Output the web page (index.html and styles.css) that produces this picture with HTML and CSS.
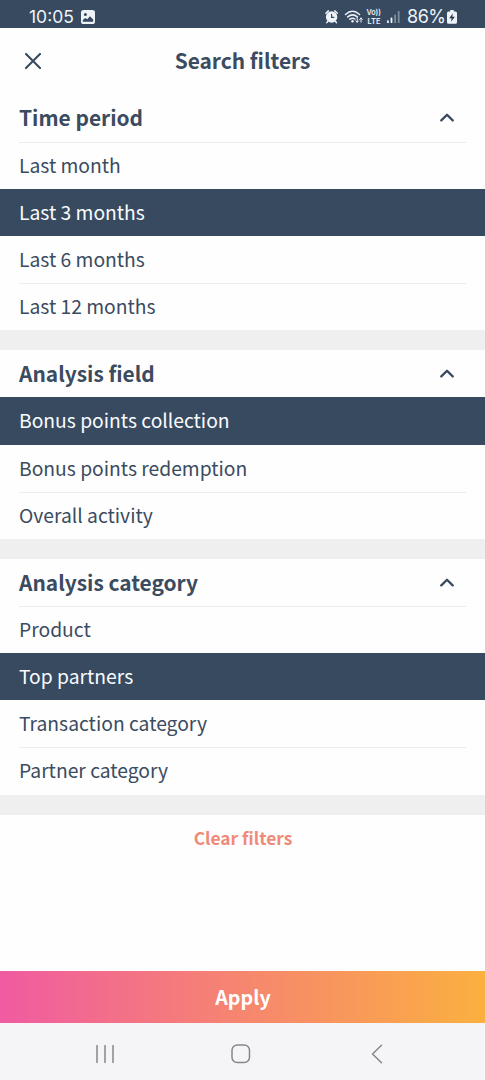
FILE: index.html
```html
<!DOCTYPE html>
<html lang="en">
<head>
<meta charset="utf-8">
<title>Search filters</title>
<link rel="stylesheet" href="styles.css">
</head>
<body>
<div class="screen">
  <div class="status">
    <span class="clock">10:05</span>
    <svg class="photo" width="14" height="14" viewBox="0 0 14 14"><rect width="14" height="14" rx="2.6" fill="#eef3fa"/><circle cx="4.4" cy="4.6" r="1.5" fill="#384a60"/><path d="M1.8 11.8V10l2.400-2 2 1.300L9 6.200l3.200 3.200v2.400z" fill="#384a60"/></svg>
    <svg class="indicators" width="78" height="18" viewBox="0 0 78 18">
      <g fill="none" stroke="#eef3fa" stroke-linecap="round">
        <circle cx="6.600" cy="9" r="5.700" fill="#eef3fa" stroke="none"/>
        <path d="M.9 5.200l2.500-2.300M12.300 5.200L9.800 2.900M2.800 13.200l-1 1.400M10.400 13.200l1 1.400" stroke-width="1.500"/>
        <path d="M6.600 6.400V9.400H8.800" stroke="#384a60" stroke-width="1.200"/>
        <path d="M20.500 6.500Q27.500 0 34.500 6.500M22.700 8.900Q27.500 4.800 32.300 8.900M24.900 11.200Q27.500 9.300 29.800 11" stroke-width="1.500"/>
        <circle cx="27.500" cy="13.200" r="1.200" fill="#eef3fa" stroke="none"/>
        <path d="M32.200 10v4.200M30.800 12.900l1.400 1.400 1.400-1.400M36 14.200V10M34.600 11.400L36 10l1.400 1.400" stroke-width="1"/>
      </g>
      <g class="volte" fill="#eef3fa"><text x="41.500" y="6.800" textLength="14.500" lengthAdjust="spacingAndGlyphs">Vo))</text><text x="42.500" y="15.600" textLength="13" lengthAdjust="spacingAndGlyphs">LTE</text></g>
      <g fill="#eef3fa"><rect x="62" y="12.200" width="1.800" height="2.800" rx=".6"/><rect x="65.600" y="9.400" width="1.800" height="5.600" rx=".6"/><rect x="69.200" y="6.400" width="1.800" height="8.600" rx=".6" opacity=".4"/><rect x="72.800" y="3" width="1.800" height="12" rx=".6" opacity=".4"/></g>
    </svg>
    <span class="percent">86%</span>
    <svg class="battery" width="10" height="14" viewBox="0 0 10 14"><path d="M3.200 0h3.600v1.400H8.400A1.600 1.600 0 0 1 10 3v9.200a1.600 1.600 0 0 1-1.600 1.600H1.600A1.600 1.600 0 0 1 0 12.200V3a1.600 1.600 0 0 1 1.600-1.600h1.600z" fill="#eef3fa"/><path d="M5.900 3.300L2.200 8.300h2.400l-.6 3.500 3.900-5H5.300z" fill="#26384d"/></svg>
  </div>
  <header class="title-bar">
    <svg class="close" width="16" height="16" viewBox="0 0 16 16"><path d="M1 1l14 14M15 1L1 15"/></svg>
    <h1>Search filters</h1>
  </header>
  <section class="group">
    <h2>Time period<svg class="chevron" width="14" height="9" viewBox="0 0 14 9"><path d="M1.300 7.400L7 1.700l5.700 5.700"/></svg></h2>
    <div class="option"><span>Last month</span></div>
    <div class="option selected"><span>Last 3 months</span></div>
    <div class="option bare"><span>Last 6 months</span></div>
    <div class="option"><span>Last 12 months</span></div>
  </section>
  <section class="group">
    <h2>Analysis field<svg class="chevron" width="14" height="9" viewBox="0 0 14 9"><path d="M1.300 7.400L7 1.700l5.700 5.700"/></svg></h2>
    <div class="option selected"><span>Bonus points collection</span></div>
    <div class="option bare"><span>Bonus points redemption</span></div>
    <div class="option"><span>Overall activity</span></div>
  </section>
  <section class="group">
    <h2>Analysis category<svg class="chevron" width="14" height="9" viewBox="0 0 14 9"><path d="M1.300 7.400L7 1.700l5.700 5.700"/></svg></h2>
    <div class="option"><span>Product</span></div>
    <div class="option selected"><span>Top partners</span></div>
    <div class="option bare"><span>Transaction category</span></div>
    <div class="option"><span>Partner category</span></div>
  </section>
  <div class="clear">Clear filters</div>
  <div class="apply">Apply</div>
  <nav class="nav">
    <svg width="18" height="18" viewBox="0 0 18 18"><path d="M1 .5v17M9 .5v17M17 .5v17"/></svg>
    <svg class="home" width="20" height="20" viewBox="0 0 20 20"><rect x="1" y="1" width="17.500" height="17.500" rx="5.300"/></svg>
    <svg width="12" height="20" viewBox="0 0 12 20"><path d="M10.500 1.200L1.500 10l9 8.800"/></svg>
  </nav>
</div>
</body>
</html>
```
FILE: styles.css
```css
* { box-sizing: border-box; }
body { margin: 0; background: #fefefe; }
.screen {
  width: 485px;
  height: 1080px;
  display: flex;
  flex-direction: column;
  overflow: hidden;
  color: #3b4b60;
  font-family: "Noto Sans CJK SC", "Noto Sans", sans-serif;
}
.status {
  flex: none;
  height: 28.400px;
  padding: 5px 28px 0 29px;
  display: flex;
  align-items: center;
  background: #384a60;
  color: #eef3fa;
  font: 400 17.500px/24px Inter, sans-serif;
}
.clock { width: 44px; white-space: nowrap; }
.photo { margin-left: 8px; }
.indicators { margin-left: auto; margin-right: 4px; }
.percent { width: 37px; margin-right: 3px; font-size: 18px; letter-spacing: -0.500px; }
.volte { font: 600 8px Inter, sans-serif; }
.title-bar {
  flex: none;
  height: 66.200px;
  display: grid;
  grid-template-columns: 73px 1fr 73px;
  align-items: center;
}
.close { margin-left: 25px; }
.close path { fill: none; stroke: #384a60; stroke-width: 2.100; stroke-linecap: round; }
h1 { margin: -2px 0 0; font-size: 20.900px; line-height: 30px; font-weight: 700; text-align: center; }
.group { flex: none; border-bottom: 20px solid #efefef; }
h2 {
  margin: 0;
  height: 47.150px;
  padding: 0 31px 1.500px 19px;
  display: flex;
  align-items: center;
  justify-content: space-between;
  font-size: 20.900px;
  line-height: 30px;
  font-weight: 700;
}
.chevron { margin-top: 1px; }
.chevron path { fill: none; stroke: #384a60; stroke-width: 2.300; stroke-linecap: round; stroke-linejoin: round; }
.option { height: 47.150px; padding: 0 19px; font-size: 19.300px; line-height: 44px; white-space: nowrap; }
.option span { display: block; height: 100%; border-top: 1px solid #ebecee; }
.option.selected { background: #384a60; color: #f8fcff; }
.option.selected span, .option.bare span { border-color: transparent; }
.clear { flex: 1; padding: 8px 0 0 1px; text-align: center; font-size: 17.350px; line-height: 30px; font-weight: 700; color: #ef8a78; }
.apply {
  flex: none;
  height: 52px;
  padding-left: 1px;
  text-align: center;
  font-size: 19.700px;
  line-height: 52px;
  font-weight: 700;
  color: #fff;
  background: linear-gradient(90deg, #f05ba1, #f6866f 50%, #fbb040);
}
.nav {
  flex: none;
  height: 57px;
  padding: 4px 102px 0 96px;
  display: flex;
  align-items: center;
  justify-content: space-between;
  background: #f5f5f8;
}
.home { margin-right: 4px; }
.nav svg { fill: none; stroke: #87878b; stroke-width: 1.500; stroke-linecap: round; stroke-linejoin: round; }
```
